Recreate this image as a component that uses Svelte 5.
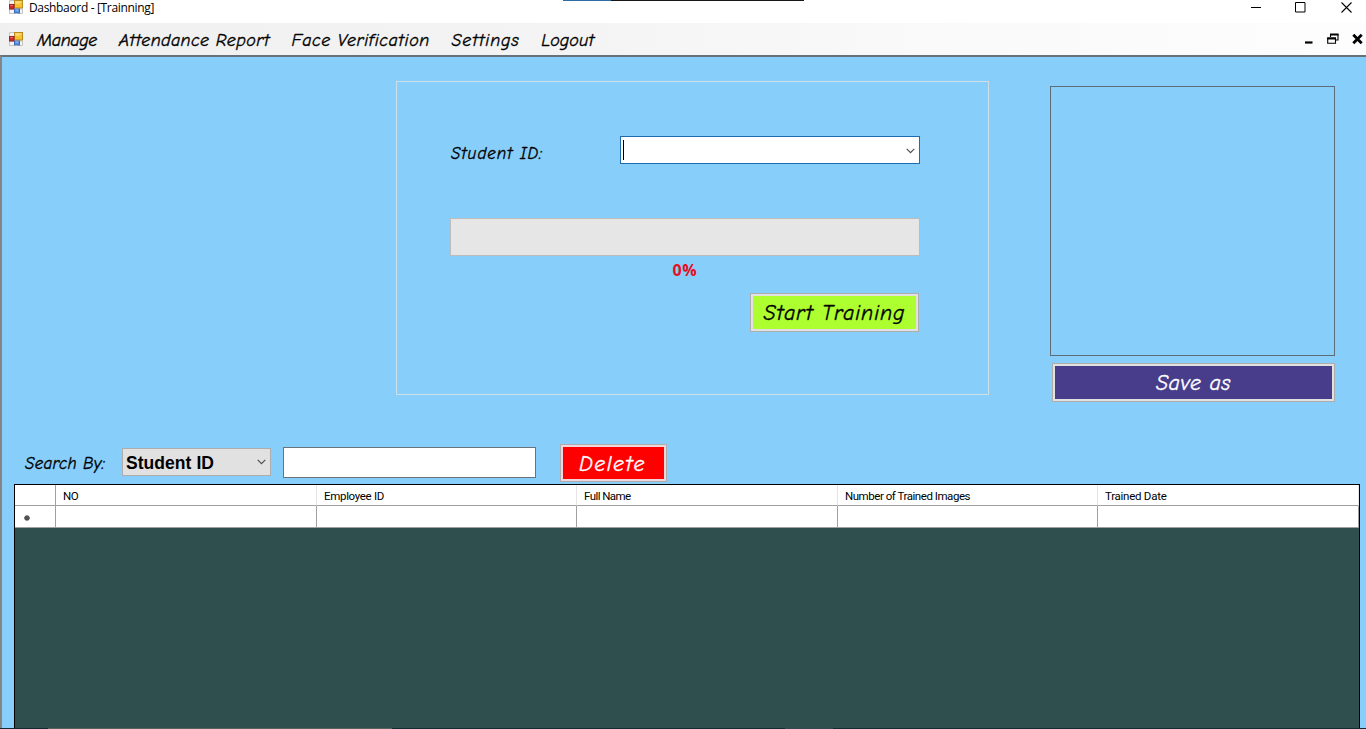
<script>
  const menu = [
    { label: 'Manage', width: 60 },
    { label: 'Attendance Report', width: 151 },
    { label: 'Face Verification', width: 138.5 },
    { label: 'Settings', width: 68 },
    { label: 'Logout', width: 53 }
  ];
  const columns = [
    { label: 'NO', width: 15 },
    { label: 'Employee ID', width: 60 },
    { label: 'Full Name', width: 46.5 },
    { label: 'Number of Trained Images', width: 125 },
    { label: 'Trained Date', width: 61.5 }
  ];

  // Tracks a label so that it occupies the given width.
  function fit(node, width) {
    const apply = () => {
      node.style.letterSpacing = '0px';
      const natural = node.getBoundingClientRect().width;
      node.style.letterSpacing = `${(width - natural) / node.textContent.length}px`;
    };
    apply();
    document.fonts?.ready.then(apply);
  }
</script>

{#snippet appIcon()}
  <svg class="app-icon" width="14" height="14" viewBox="0 0 14 14">
    <path d="M.5.5h5v4h-5zM.5 9.5h5v4h-5zM9.5 9h4v4.500h-4z" fill="#f4f4f4" stroke="#c4c4c4" />
    <rect x="5.500" y=".5" width="8" height="7.500" fill="#f5c12e" stroke="#b98a1c" />
    <path d="M6.500 2h6M6.500 3h4" stroke="#ffe696" />
    <rect x=".5" y="4.500" width="4.500" height="4.500" fill="#d22a2a" stroke="#a22024" />
    <path d="M1.500 5.500h2" stroke="#ef8078" />
    <rect x="5.500" y="9" width="5" height="4" fill="#5b8ede" stroke="#3b68b8" />
    <path d="M6.500 10h3" stroke="#a4c5f4" />
  </svg>
{/snippet}

{#snippet chevron()}
  <svg class="chevron" width="9" height="6" viewBox="0 0 9 6"><path d="M.7.800 4.500 4.600 8.300.800" fill="none" stroke="#505050" stroke-width="1.200" /></svg>
{/snippet}

<div class="window">
  <header class="titlebar">
    {@render appIcon()}
    <span class="title"><span class="fit" use:fit={125}>Dashbaord - [Trainning]</span></span>
    <div class="edge"></div>
    <div class="window-buttons">
      <svg width="10" height="11" viewBox="0 0 10 11"><path d="M0 5.500h10" stroke="#000" /></svg>
      <svg width="11" height="11" viewBox="0 0 11 11"><path d="M.5.5h9.500v9.500h-9.500z" fill="none" stroke="#000" /></svg>
      <svg width="11" height="11" viewBox="0 0 11 11"><path d="m.5.5 10 10m0-10-10 10" stroke="#000" stroke-width="1.100" /></svg>
    </div>
  </header>

  <nav class="menubar">
    {@render appIcon()}
    <div class="menu">
      {#each menu as item}
        <span class="fit hand" use:fit={item.width}>{item.label}</span>
      {/each}
    </div>
    <div class="mdi-buttons">
      <svg width="8" height="12" viewBox="0 0 8 12"><path d="M0 9.500h7.500" stroke="#000" stroke-width="2.200" /></svg>
      <svg width="12" height="12" viewBox="0 0 12 12"><path d="M3.500 4V1.500h7.500V7H9" fill="none" stroke="#000" stroke-width="1.100" /><path d="M3 1.500h8.500" stroke="#000" stroke-width="2" /><path d="M.7 5h7.800v5.300H.7z" fill="none" stroke="#000" stroke-width="1.100" /><path d="M.2 5.500h8.800" stroke="#000" stroke-width="2" /></svg>
      <svg width="11" height="12" viewBox="0 0 11 12"><path d="m1.300 1.800 8.400 8.400m0-8.400-8.400 8.400" stroke="#000" stroke-width="2.800" /></svg>
    </div>
  </nav>

  <main>
    <section class="upper">
      <div class="group">
        <div class="field">
          <span class="label hand"><span class="fit" use:fit={92}>Student ID:</span></span>
          <div class="combo"><span class="caret"></span>{@render chevron()}</div>
        </div>
        <div class="progress"></div>
        <div class="percent"><span class="fit" use:fit={25}>0%</span></div>
        <button class="start hand"><span class="fit" use:fit={142}>Start Training</span></button>
      </div>
      <div class="preview">
        <div class="picture"></div>
        <button class="save hand"><span class="fit" use:fit={75}>Save as</span></button>
      </div>
    </section>

    <section class="search">
      <span class="label hand"><span class="fit" use:fit={80}>Search By:</span></span>
      <div class="select"><span class="fit" use:fit={88}>Student ID</span>{@render chevron()}</div>
      <div class="textbox"></div>
      <button class="delete hand"><span class="fit" use:fit={67}>Delete</span></button>
    </section>

    <section class="grid">
      <div class="row head">
        <div></div>
        {#each columns as col}
          <div><span class="fit" use:fit={col.width}>{col.label}</span></div>
        {/each}
      </div>
      <div class="row">
        <div class="marker">
          <svg width="6" height="6" viewBox="0 0 6 6"><path d="M3 0v6M0 3h6M1 1l4 4M5 1 1 5" stroke="#505050" stroke-width="1.300" /></svg>
        </div>
        {#each columns as _}<div></div>{/each}
      </div>
    </section>
  </main>
  <footer></footer>
</div>

<style>
  :global(body) { margin: 0; overflow: hidden; }
  * { box-sizing: border-box; }
  svg { display: block; flex: none; }
  .window {
    width: 1366px; height: 729px; display: flex; flex-direction: column;
    overflow: hidden; background: #fff; color: #000;
    font-family: "Open Sans", sans-serif;
  }
  .fit { display: inline-block; white-space: pre; }
  .hand {
    font-family: "Comic Sans MS", "Comic Neue", cursive, "Open Sans", sans-serif;
    font-style: italic; -webkit-text-stroke: .35px currentColor;
  }

  .titlebar { height: 23px; flex: none; display: flex; padding-left: 9px; }
  .title { margin-left: 6px; width: 528px; font-size: 12px; line-height: 16px; }
  .edge { width: 241px; height: 1px; margin-left: 6px; background: linear-gradient(90deg, #2e6da4 48px, #161616 48px); }
  .window-buttons { margin-left: auto; display: flex; gap: 35px; padding: 2px 14px 0 0; }
  .window-buttons svg:first-child { margin-right: -1px; transform: translateX(0); }

  .menubar {
    height: 32px; flex: none; display: flex; padding-left: 9px;
    background: linear-gradient(90deg, #f0f0f0 0, #f3f3f3 500px, #f9f9f9 900px, #fdfdfd 100%);
  }
  .menubar .app-icon { margin-top: 9px; }
  .menu { display: flex; gap: 21.700px; margin-left: 14px; font-size: 18px; line-height: 35px; }
  .mdi-buttons { margin-left: auto; display: flex; gap: 14px; padding: 10px 3px 0 0; }
  .mdi-buttons svg:last-child { margin-left: -1px; }

  main {
    flex: 1; min-height: 0; display: flex; flex-direction: column;
    border: solid #696969; border-width: 2px 0 0 2px;
    border-top-color: #66717a; border-left-color: #858585; background: #87cefa;
  }
  .upper { display: flex; height: 387px; flex: none; padding: 24px 0 0 394px; }
  .group { width: 593px; height: 314px; border: 1px solid #cfdfe8; padding: 54px 68px 0 53px; }
  .field { display: flex; justify-content: space-between; height: 28px; }
  .field .label { font-size: 17px; line-height: 35px; margin-left: 1px; }
  .combo {
    width: 300px; height: 28px; background: #fff; border: 1px solid #1c6cae;
    display: flex; align-items: center; justify-content: space-between; padding: 0 4px 0 2px;
  }
  .caret { width: 1px; height: 20px; background: #000; margin-top: -1px; }
  .combo :global(.chevron) { margin-top: 2px; }
  .progress { height: 38px; margin-top: 54px; background: #e6e6e6; border: 1px solid #bcbcbc; }
  .percent { text-align: center; font: 700 16px/28px "Open Sans", sans-serif; color: #e60f22; }
  button {
    display: flex; align-items: center; justify-content: center; padding: 0;
    border: 1px solid #adadad; box-shadow: inset 0 0 0 2px #e1e1e1; font-size: 22px; line-height: 30px;
  }
  .start { width: 169px; height: 39px; margin: 9px 1px 0 auto; background: #adff2f; color: #000; }
  .start .fit { margin: 1px 0 0; }
  .preview { margin-left: 61px; padding-top: 5px; }
  .picture { width: 285px; height: 270px; border: 1px solid #5e6c76; }
  .save { width: 283px; height: 39px; margin: 7px 0 0 2px; background: #483d8b; color: #fff; }
  .save .fit { margin-top: 1px; }
  .delete .fit { margin: 1px 2px 0 0; }

  .search { display: flex; height: 40px; flex: none; padding-left: 23px; }
  .search .label { width: 97px; font-size: 17px; line-height: 39px; }
  .select {
    width: 149px; height: 28px; margin-top: 4px; padding: 0 4px 0 3px; background: #e1e1e1; border: 1px solid #adadad;
    display: flex; align-items: center; justify-content: space-between;
    font: 700 17.500px/26px "Liberation Sans", Arial, sans-serif;
  }
  .select .fit { padding-top: 1px; }
  .textbox { width: 253px; height: 31px; margin: 3px 0 0 12px; background: #fff; border: 1px solid #68737a; }
  .delete { width: 107px; height: 38px; margin-left: 24px; background: #f00; color: #fff; box-shadow: inset 0 0 0 2px #f0d6da; }

  .grid {
    flex: 1; min-height: 0; margin: 0 6px 0 12px; background: #2f4f4f;
    border: 1px solid #000; border-bottom: 0;
  }
  .row { display: grid; grid-template-columns: 41px 261px 260px 261px 260px 261px; grid-template-rows: 100%; height: 22px; background: #fff; }
  .row > div { border-right: 1px solid #a0a0a0; border-bottom: 1px solid #a0a0a0; min-height: 0; }
  .row.head { height: 21px; font: 11.500px/22px Roboto, sans-serif; }
  .head > div + div { padding-left: 7px; border-right-color: #e5e5e5; }
  .marker { padding: 9px 0 0 9px; }
  footer { height: 1px; flex: none; background: linear-gradient(90deg, #172631 48px, #5b6060 48px 392px, #142932 392px 785px, #39474e 785px 833px, #142932 833px); }
</style>
